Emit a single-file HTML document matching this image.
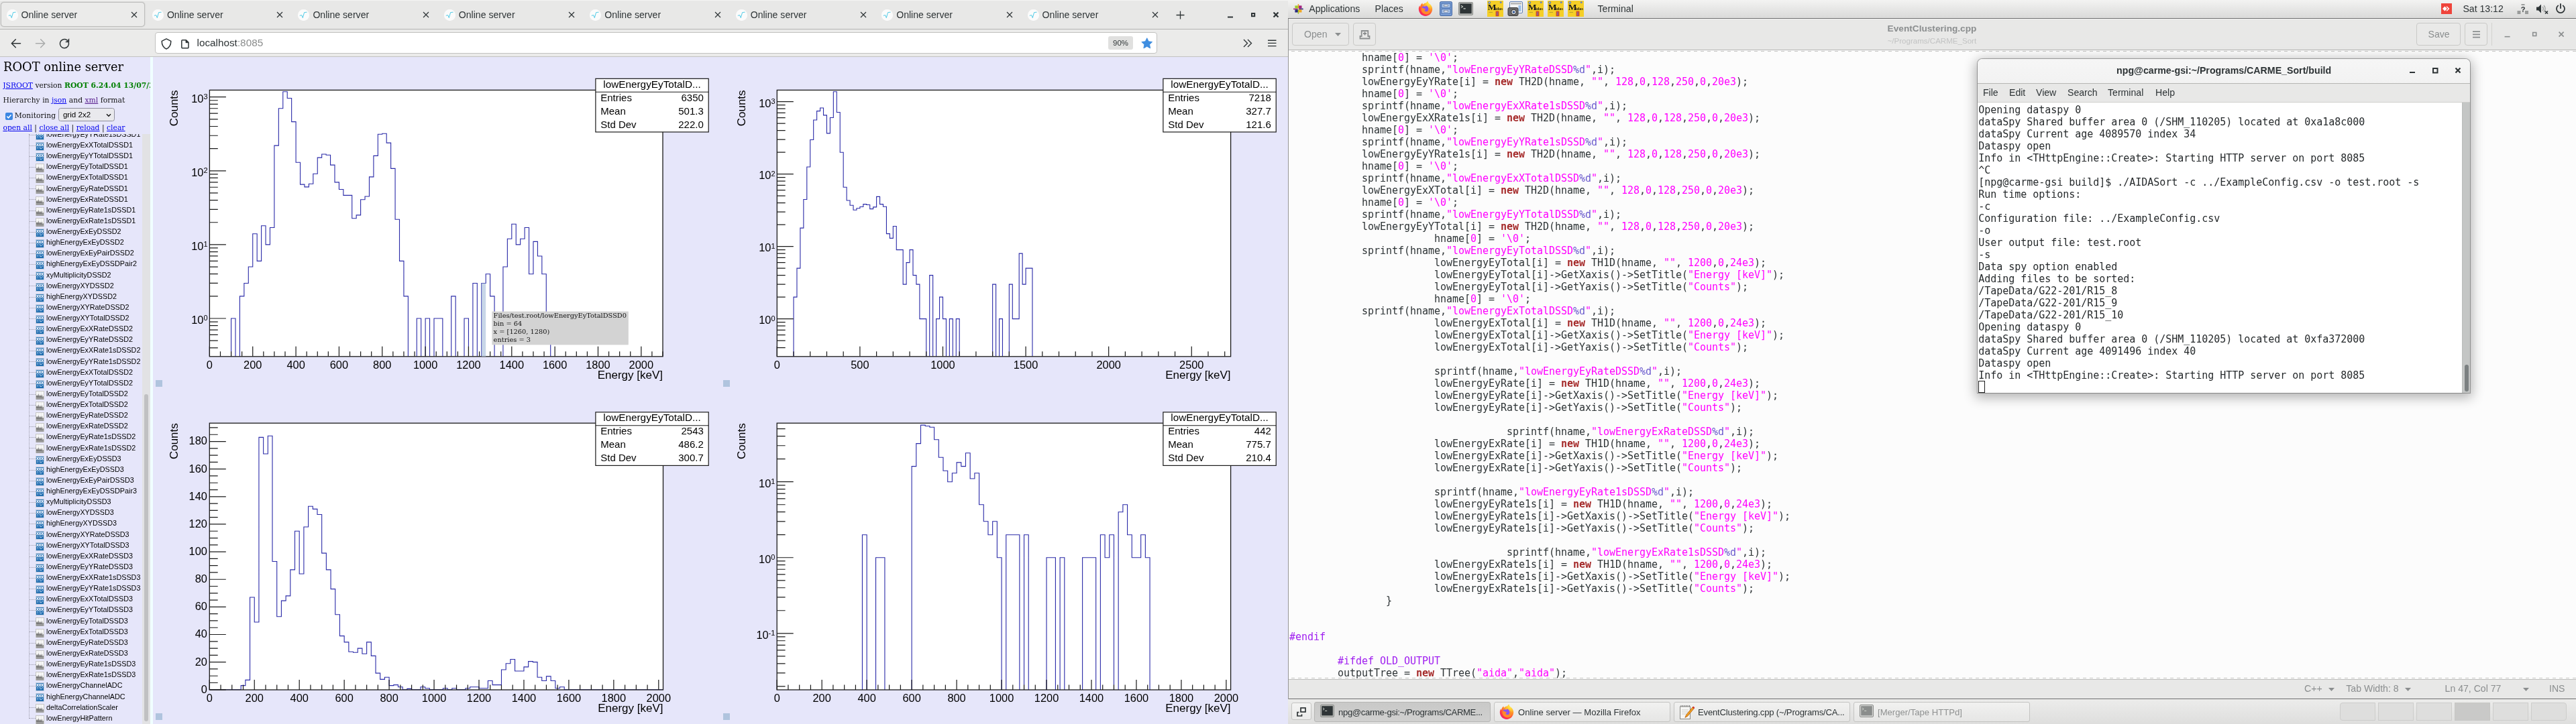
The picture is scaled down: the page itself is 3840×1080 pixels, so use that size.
<!DOCTYPE html>
<html><head><meta charset="utf-8"><title>Online server</title><style>
*{box-sizing:border-box}
html,body{margin:0;padding:0}
body{width:3840px;height:1080px;position:relative;overflow:hidden;background:#fcfcfc;font-family:"Liberation Sans",sans-serif;font-size:14.1px;color:#2e3436}
.abs{position:absolute}
.ui{font-family:"Liberation Sans",sans-serif;font-size:14.1px;white-space:pre}
svg{display:block}
#ff,#gn{will-change:transform}
/* firefox */
#ff{position:absolute;left:0;top:0;width:1920px;height:1080px;overflow:hidden;background:#e6e6fa}
#tabbar{position:absolute;left:0;top:0;width:1920px;height:44px;background:#e8e8e7;border-bottom:1px solid #b4b4b2}
#navbar{position:absolute;left:0;top:44px;width:1920px;height:41px;background:#ebebea;border-bottom:1px solid #c3c3c1}
.tab{position:absolute;top:0;height:43px;width:217.7px}
.tab .t{position:absolute;left:31.5px;top:13.5px;font-size:14.1px;line-height:17px;color:#2e3436;white-space:pre}
.tab .fav{position:absolute;left:9.5px;top:13.5px;width:17px;height:17px;border-radius:50%;background:#fcfcfc}
.tab .x{position:absolute;left:195px;top:17px}
#seltab{position:absolute;left:1.2px;top:3.2px;width:215.2px;height:37.2px;border:1px solid #bebebc;border-radius:5px;background:#ebebea;box-shadow:0 0 1.5px rgba(0,0,0,.25)}
#url{position:absolute;left:231px;top:4px;width:1493.5px;height:32px;background:#fff;border:1px solid #c2c2c0;border-radius:4px}
/* jsroot */
#left{position:absolute;left:0;top:85px;width:224px;height:995px;background:#e6e6fa;overflow:hidden;font-family:"DejaVu Serif","Liberation Serif",serif;font-size:10.8px;color:#111}
#sep{position:absolute;left:224px;top:85px;width:4px;height:995px;background:#f0ffff}
#left a{color:#0000ee;text-decoration:underline}
#tree{position:absolute;left:0;top:115px;width:212px;height:880px;overflow:hidden;font-family:"Liberation Sans",sans-serif;font-size:10.8px;color:#000}
.it{position:absolute;left:69px;height:16px;line-height:16px;white-space:pre}
.ic{position:absolute;left:53px;width:13px;height:13px}
/* gnome */
#gn{position:absolute;left:1920px;top:0;width:1920px;height:1080px;overflow:hidden;background:#fcfcfc}
#panel{position:absolute;left:0;top:0;width:1920px;height:28px;background:linear-gradient(#f3f3f2,#e4e4e3 60%,#dadad9);border-bottom:1px solid #6f6f6f}
#ghead{position:absolute;left:0;top:28px;width:1920px;height:47px;background:#e8e8e7;border-bottom:1px solid #b5b5b3;border-left:1px solid #8f8f8f;border-top:1px solid #f4f4f3}
.btn{position:absolute;border:1px solid #c9c9c7;border-radius:4px;background:#e9e9e8}
#code{position:absolute;left:0;top:77.4px;width:1920px;height:937px;font-family:"DejaVu Sans Mono","Liberation Mono",monospace;font-size:15px;letter-spacing:-0.031px;line-height:18px;color:#2e3436;white-space:pre;border-left:1px solid #8f8f8f}
#code div{height:18px;position:absolute;left:1.5px}
.s{color:#ff00ff}.n{color:#ff00ff}.f{color:#6a5acd}.k{color:#a52a2a;font-weight:bold}.p{color:#a020f0}
#status{position:absolute;left:0;top:1013px;width:1920px;height:30px;background:#e8e8e7;border-top:1px solid #bdbdbb;border-left:1px solid #8f8f8f;color:#8b8e8f}
#taskbar{position:absolute;left:0;top:1042px;width:1920px;height:38px;background:linear-gradient(#ececeb,#dededd);border-top:1px solid #707070}
.task{position:absolute;top:3.5px;height:30.5px;width:263px;border:1px solid #c4c4c2;border-radius:3px;background:linear-gradient(#f1f1f0,#e6e6e5)}
.task span{position:absolute;left:35px;top:6px;font-size:13.1px;line-height:17px;white-space:pre}
/* terminal */
#term{position:absolute;left:1028px;top:87.5px;width:734.3px;height:498.8px;border-radius:7px 7px 0 0;box-shadow:0 4px 18px 3px rgba(0,0,0,.3),0 0 0 1px rgba(0,0,0,.3);background:#fff}
#ttitle{position:absolute;left:0;top:0;width:100%;height:37px;border-radius:7px 7px 0 0;background:linear-gradient(#f6f6f6,#f2f2f2);border-bottom:1px solid #b5b5b3}
#tmenu{position:absolute;left:0;top:37px;width:100%;height:28px;background:#e8e8e7;border-bottom:1px solid #cfcfcd}
#ttext{position:absolute;left:0;top:65px;width:722px;height:433.8px;background:#fff;font-family:"DejaVu Sans Mono","Liberation Mono",monospace;font-size:15px;letter-spacing:-0.031px;line-height:18px;color:#262a2c;white-space:pre}
#ttext div{position:absolute;left:1.3px;height:18px}
#tscroll{position:absolute;left:722px;top:65px;width:12.3px;height:433.8px;background:#c4c6c5;border-left:1px solid #b9bbba}
</style></head><body>
<div id="ff">
<div id="tabbar">
<div class="abs" style="left:0;top:0;width:1920px;height:1px;background:#f4f4f3"></div><div id="seltab"></div>
<div class="tab" style="left:0.0px"><svg class="fav" viewBox="0 0 17 17"><circle cx="8.5" cy="8.5" r="8.5" fill="#fbfbfb"/><path d="M3.2,9.2 L5.8,8.6 L7.3,12.6 L9.6,4.6 L13.2,4.2" fill="none" stroke="#52cbe6" stroke-width="1" stroke-linejoin="round" stroke-linecap="round"/></svg><span class="t">Online server</span><svg class="x" width="10" height="10" viewBox="0 0 10 10"><path d="M1,1L9,9M9,1L1,9" stroke="#2e3436" stroke-width="1.15" fill="none"/></svg></div>
<div class="tab" style="left:217.4px"><svg class="fav" viewBox="0 0 17 17"><circle cx="8.5" cy="8.5" r="8.5" fill="#fbfbfb"/><path d="M3.2,9.2 L5.8,8.6 L7.3,12.6 L9.6,4.6 L13.2,4.2" fill="none" stroke="#52cbe6" stroke-width="1" stroke-linejoin="round" stroke-linecap="round"/></svg><span class="t">Online server</span><svg class="x" width="10" height="10" viewBox="0 0 10 10"><path d="M1,1L9,9M9,1L1,9" stroke="#2e3436" stroke-width="1.15" fill="none"/></svg></div>
<div class="tab" style="left:434.9px"><svg class="fav" viewBox="0 0 17 17"><circle cx="8.5" cy="8.5" r="8.5" fill="#fbfbfb"/><path d="M3.2,9.2 L5.8,8.6 L7.3,12.6 L9.6,4.6 L13.2,4.2" fill="none" stroke="#52cbe6" stroke-width="1" stroke-linejoin="round" stroke-linecap="round"/></svg><span class="t">Online server</span><svg class="x" width="10" height="10" viewBox="0 0 10 10"><path d="M1,1L9,9M9,1L1,9" stroke="#2e3436" stroke-width="1.15" fill="none"/></svg></div>
<div class="tab" style="left:652.3px"><svg class="fav" viewBox="0 0 17 17"><circle cx="8.5" cy="8.5" r="8.5" fill="#fbfbfb"/><path d="M3.2,9.2 L5.8,8.6 L7.3,12.6 L9.6,4.6 L13.2,4.2" fill="none" stroke="#52cbe6" stroke-width="1" stroke-linejoin="round" stroke-linecap="round"/></svg><span class="t">Online server</span><svg class="x" width="10" height="10" viewBox="0 0 10 10"><path d="M1,1L9,9M9,1L1,9" stroke="#2e3436" stroke-width="1.15" fill="none"/></svg></div>
<div class="tab" style="left:869.8px"><svg class="fav" viewBox="0 0 17 17"><circle cx="8.5" cy="8.5" r="8.5" fill="#fbfbfb"/><path d="M3.2,9.2 L5.8,8.6 L7.3,12.6 L9.6,4.6 L13.2,4.2" fill="none" stroke="#52cbe6" stroke-width="1" stroke-linejoin="round" stroke-linecap="round"/></svg><span class="t">Online server</span><svg class="x" width="10" height="10" viewBox="0 0 10 10"><path d="M1,1L9,9M9,1L1,9" stroke="#2e3436" stroke-width="1.15" fill="none"/></svg></div>
<div class="tab" style="left:1087.2px"><svg class="fav" viewBox="0 0 17 17"><circle cx="8.5" cy="8.5" r="8.5" fill="#fbfbfb"/><path d="M3.2,9.2 L5.8,8.6 L7.3,12.6 L9.6,4.6 L13.2,4.2" fill="none" stroke="#52cbe6" stroke-width="1" stroke-linejoin="round" stroke-linecap="round"/></svg><span class="t">Online server</span><svg class="x" width="10" height="10" viewBox="0 0 10 10"><path d="M1,1L9,9M9,1L1,9" stroke="#2e3436" stroke-width="1.15" fill="none"/></svg></div>
<div class="tab" style="left:1304.7px"><svg class="fav" viewBox="0 0 17 17"><circle cx="8.5" cy="8.5" r="8.5" fill="#fbfbfb"/><path d="M3.2,9.2 L5.8,8.6 L7.3,12.6 L9.6,4.6 L13.2,4.2" fill="none" stroke="#52cbe6" stroke-width="1" stroke-linejoin="round" stroke-linecap="round"/></svg><span class="t">Online server</span><svg class="x" width="10" height="10" viewBox="0 0 10 10"><path d="M1,1L9,9M9,1L1,9" stroke="#2e3436" stroke-width="1.15" fill="none"/></svg></div>
<div class="tab" style="left:1522.1px"><svg class="fav" viewBox="0 0 17 17"><circle cx="8.5" cy="8.5" r="8.5" fill="#fbfbfb"/><path d="M3.2,9.2 L5.8,8.6 L7.3,12.6 L9.6,4.6 L13.2,4.2" fill="none" stroke="#52cbe6" stroke-width="1" stroke-linejoin="round" stroke-linecap="round"/></svg><span class="t">Online server</span><svg class="x" width="10" height="10" viewBox="0 0 10 10"><path d="M1,1L9,9M9,1L1,9" stroke="#2e3436" stroke-width="1.15" fill="none"/></svg></div>
<svg class="abs" style="left:1753px;top:16px" width="13" height="13" viewBox="0 0 13 13"><path d="M6.5,0.5V12.5M0.5,6.5H12.5" stroke="#2e3436" stroke-width="1.3"/></svg>
<svg class="abs" style="left:1826px;top:12px" width="90" height="22" viewBox="1826 12 90 22"><path d="M1830,25.5h8" stroke="#2e3436" stroke-width="2"/><rect x="1866" y="20" width="4.2" height="4.2" fill="none" stroke="#2e3436" stroke-width="2"/><path d="M1898.5,18.5l7,7m0,-7l-7,7" stroke="#2e3436" stroke-width="2.2"/></svg>
</div>
<div id="navbar">
<svg class="abs" style="left:10px;top:8px" width="110" height="26" viewBox="10 52 110 26" fill="none" stroke-linecap="round" stroke-linejoin="round"><path d="M30.5,64.7H17.5M23.3,58.7l-6,6l6,6" stroke="#2e3436" stroke-width="1.5"/><path d="M53.5,64.7H66.5M60.7,58.7l6,6l-6,6" stroke="#a9abab" stroke-width="1.5"/><path d="M102.3,63.2A6.6,6.6 0 1 1 99.6,59.6" stroke="#2e3436" stroke-width="1.5"/><path d="M102.8,58.2v4.6h-4.6z" fill="#2e3436" stroke="#2e3436" stroke-width="0.8"/></svg>
<div id="url">
<svg class="abs" style="left:6px;top:5.5px" width="50" height="21" viewBox="237 53.5 50 21" fill="none" stroke="#2e3436" stroke-width="1.5" stroke-linejoin="round"><path d="M247,56.4L253.8,59.9C253.8,65.6 251.4,69.4 247,71.5C242.6,69.4 240.2,65.6 240.2,59.9Z"/><path d="M271,58.2h5.4l3.6,3.6v7.2a1.2,1.2 0 0 1 -1.2,1.2h-7.8a1.2,1.2 0 0 1 -1.2,-1.2v-9.6a1.2,1.2 0 0 1 1.2,-1.2z"/><path d="M276,58.4v3.8h3.8z" fill="#2e3436" stroke-width="0.8"/></svg>
<span class="abs" style="left:61.5px;top:4.8px;font-size:15.3px;line-height:19px;white-space:pre;color:#2e3436">localhost<span style="color:#8a8c8c">:8085</span></span>
<div class="abs" style="left:1420px;top:5px;width:37px;height:20px;border-radius:3px;background:#e0e0df;font-size:11.4px;line-height:20px;text-align:center;color:#2e3436">90%</div>
<svg class="abs" style="left:1469px;top:7px" width="17.5" height="16.6" viewBox="0 0 19 18"><path d="M9.5,0.8l2.6,5.5l6,0.8l-4.4,4.2l1.1,6l-5.3,-2.9l-5.3,2.9l1.1,-6l-4.4,-4.2l6,-0.8z" fill="#3f8ee0" stroke="#3f8ee0" stroke-width="1" stroke-linejoin="round"/></svg>
</div>
<svg class="abs" style="left:1850px;top:11px" width="62" height="20" viewBox="1850 55 62 20" fill="none" stroke="#2e3436" stroke-width="1.4"><path d="M1854,59l5.5,5.5l-5.5,5.5M1860,59l5.5,5.5l-5.5,5.5"/><path d="M1890,60.2h12.5M1890,64.4h12.5M1890,68.6h12.5"/></svg>
</div>
<div id="left">
<svg width="0" height="0" style="position:absolute"><defs><symbol id="i2" viewBox="0 0 13 13"><rect x="0.5" y="0.5" width="12" height="12" fill="#1b69ae" stroke="#c3cede" stroke-width="1"/><path d="M1.6,1.8l2.8,4.2M4.4,1.8l-2.8,4.2M5.1,1.8l2.8,4.2M7.9,1.8l-2.8,4.2M8.6,1.8l2.8,4.2M11.4,1.8l-2.8,4.2" stroke="#e9f1fb" stroke-width="1.25"/><path d="M2,7.8h2.4M5.4,7.6h2.4M9,7.8h2.2M2.6,9.8h1.6M6,9.6h3.6" stroke="#b4d2ee" stroke-width="1"/></symbol><symbol id="i1" viewBox="0 0 13 13"><rect x="0.5" y="0.5" width="12" height="12" fill="#f7f7f7" stroke="#c6c6c6" stroke-width="1"/><path d="M4.5,1v8M8.5,1v8" stroke="#e9e9e9" stroke-width="0.8"/><path d="M1,12.5V8.2l1.3,-2.6l1.1,3l1.2,-4.4l1.2,4.6l1.2,-3.2l1.2,3.4l1.2,-3.8l1.2,4.2l0.9,-1.6l0.5,1.8V12.5z" fill="#6f6f6f"/><rect x="1" y="9.6" width="11" height="2.9" fill="#9b9b9b"/></symbol></defs></svg>
<div class="abs" style="left:5px;top:2.5px;font-size:17.85px;line-height:24px;white-space:pre;color:#000">ROOT online server</div>
<div class="abs" style="left:4.2px;top:35.7px;width:220px;overflow:hidden;line-height:14px;white-space:pre"><a>JSROOT</a> version <b style="color:#008000">ROOT 6.24.04 13/07/2021</b></div>
<div class="abs" style="left:4.6px;top:57.6px;line-height:14px;white-space:pre">Hierarchy in <a>json</a> and <a style="color:#551a8b">xml</a> format</div>
<svg class="abs" style="left:8px;top:83px" width="11" height="11" viewBox="0 0 11 11"><rect width="11" height="11" rx="2" fill="#3b86e2"/><path d="M2.4,5.6l2.2,2.2l4,-4.6" fill="none" stroke="#fff" stroke-width="1.5"/></svg>
<div class="abs" style="left:21.8px;top:80.7px;line-height:14px;white-space:pre">Monitoring</div>
<div class="abs" style="left:87.4px;top:76.3px;width:83.2px;height:20px;border:1px solid #8f8f9d;border-radius:3.5px;background:#e9e9ed;font-family:Liberation Sans,sans-serif;font-size:11.6px;line-height:18px;padding-left:5.5px;color:#000;white-space:pre">grid 2x2</div>
<svg class="abs" style="left:158px;top:83.6px" width="8" height="6" viewBox="0 0 8 6"><path d="M1,1.2l3,3l3,-3" fill="none" stroke="#111" stroke-width="1.4"/></svg>
<div class="abs" style="left:4.4px;top:98.8px;line-height:14px;white-space:pre"><a>open all</a> | <a>close all</a> | <a>reload</a> | <a>clear</a></div>
<div id="tree">
<div class="abs" style="left:43px;top:0;width:0;height:872px;border-left:1px dotted #9a9aa8"></div>
<div class="abs" style="left:44px;top:0.6px;width:9px;border-top:1px dotted #9a9aa8"></div>
<svg class="ic" style="top:-4.3px"><use href="#i2"/></svg>
<div class="it" style="top:-8.1px">lowEnergyEyYRate1sDSSD1</div>
<div class="abs" style="left:44px;top:16.7px;width:9px;border-top:1px dotted #9a9aa8"></div>
<svg class="ic" style="top:11.8px"><use href="#i2"/></svg>
<div class="it" style="top:8.0px">lowEnergyExXTotalDSSD1</div>
<div class="abs" style="left:44px;top:32.9px;width:9px;border-top:1px dotted #9a9aa8"></div>
<svg class="ic" style="top:28.0px"><use href="#i2"/></svg>
<div class="it" style="top:24.2px">lowEnergyEyYTotalDSSD1</div>
<div class="abs" style="left:44px;top:49.0px;width:9px;border-top:1px dotted #9a9aa8"></div>
<svg class="ic" style="top:44.1px"><use href="#i1"/></svg>
<div class="it" style="top:40.3px">lowEnergyEyTotalDSSD1</div>
<div class="abs" style="left:44px;top:65.1px;width:9px;border-top:1px dotted #9a9aa8"></div>
<svg class="ic" style="top:60.2px"><use href="#i1"/></svg>
<div class="it" style="top:56.4px">lowEnergyExTotalDSSD1</div>
<div class="abs" style="left:44px;top:81.2px;width:9px;border-top:1px dotted #9a9aa8"></div>
<svg class="ic" style="top:76.3px"><use href="#i1"/></svg>
<div class="it" style="top:72.5px">lowEnergyEyRateDSSD1</div>
<div class="abs" style="left:44px;top:97.4px;width:9px;border-top:1px dotted #9a9aa8"></div>
<svg class="ic" style="top:92.5px"><use href="#i1"/></svg>
<div class="it" style="top:88.7px">lowEnergyExRateDSSD1</div>
<div class="abs" style="left:44px;top:113.5px;width:9px;border-top:1px dotted #9a9aa8"></div>
<svg class="ic" style="top:108.6px"><use href="#i1"/></svg>
<div class="it" style="top:104.8px">lowEnergyEyRate1sDSSD1</div>
<div class="abs" style="left:44px;top:129.6px;width:9px;border-top:1px dotted #9a9aa8"></div>
<svg class="ic" style="top:124.7px"><use href="#i1"/></svg>
<div class="it" style="top:120.9px">lowEnergyExRate1sDSSD1</div>
<div class="abs" style="left:44px;top:145.7px;width:9px;border-top:1px dotted #9a9aa8"></div>
<svg class="ic" style="top:140.8px"><use href="#i2"/></svg>
<div class="it" style="top:137.0px">lowEnergyExEyDSSD2</div>
<div class="abs" style="left:44px;top:161.9px;width:9px;border-top:1px dotted #9a9aa8"></div>
<svg class="ic" style="top:157.0px"><use href="#i2"/></svg>
<div class="it" style="top:153.2px">highEnergyExEyDSSD2</div>
<div class="abs" style="left:44px;top:178.0px;width:9px;border-top:1px dotted #9a9aa8"></div>
<svg class="ic" style="top:173.1px"><use href="#i2"/></svg>
<div class="it" style="top:169.3px">lowEnergyExEyPairDSSD2</div>
<div class="abs" style="left:44px;top:194.1px;width:9px;border-top:1px dotted #9a9aa8"></div>
<svg class="ic" style="top:189.2px"><use href="#i2"/></svg>
<div class="it" style="top:185.4px">highEnergyExEyDSSDPair2</div>
<div class="abs" style="left:44px;top:210.2px;width:9px;border-top:1px dotted #9a9aa8"></div>
<svg class="ic" style="top:205.3px"><use href="#i2"/></svg>
<div class="it" style="top:201.5px">xyMultiplicityDSSD2</div>
<div class="abs" style="left:44px;top:226.4px;width:9px;border-top:1px dotted #9a9aa8"></div>
<svg class="ic" style="top:221.5px"><use href="#i2"/></svg>
<div class="it" style="top:217.7px">lowEnergyXYDSSD2</div>
<div class="abs" style="left:44px;top:242.5px;width:9px;border-top:1px dotted #9a9aa8"></div>
<svg class="ic" style="top:237.6px"><use href="#i2"/></svg>
<div class="it" style="top:233.8px">highEnergyXYDSSD2</div>
<div class="abs" style="left:44px;top:258.6px;width:9px;border-top:1px dotted #9a9aa8"></div>
<svg class="ic" style="top:253.7px"><use href="#i2"/></svg>
<div class="it" style="top:249.9px">lowEnergyXYRateDSSD2</div>
<div class="abs" style="left:44px;top:274.7px;width:9px;border-top:1px dotted #9a9aa8"></div>
<svg class="ic" style="top:269.8px"><use href="#i2"/></svg>
<div class="it" style="top:266.0px">lowEnergyXYTotalDSSD2</div>
<div class="abs" style="left:44px;top:290.9px;width:9px;border-top:1px dotted #9a9aa8"></div>
<svg class="ic" style="top:286.0px"><use href="#i2"/></svg>
<div class="it" style="top:282.2px">lowEnergyExXRateDSSD2</div>
<div class="abs" style="left:44px;top:307.0px;width:9px;border-top:1px dotted #9a9aa8"></div>
<svg class="ic" style="top:302.1px"><use href="#i2"/></svg>
<div class="it" style="top:298.3px">lowEnergyEyYRateDSSD2</div>
<div class="abs" style="left:44px;top:323.1px;width:9px;border-top:1px dotted #9a9aa8"></div>
<svg class="ic" style="top:318.2px"><use href="#i2"/></svg>
<div class="it" style="top:314.4px">lowEnergyExXRate1sDSSD2</div>
<div class="abs" style="left:44px;top:339.2px;width:9px;border-top:1px dotted #9a9aa8"></div>
<svg class="ic" style="top:334.3px"><use href="#i2"/></svg>
<div class="it" style="top:330.5px">lowEnergyEyYRate1sDSSD2</div>
<div class="abs" style="left:44px;top:355.4px;width:9px;border-top:1px dotted #9a9aa8"></div>
<svg class="ic" style="top:350.5px"><use href="#i2"/></svg>
<div class="it" style="top:346.7px">lowEnergyExXTotalDSSD2</div>
<div class="abs" style="left:44px;top:371.5px;width:9px;border-top:1px dotted #9a9aa8"></div>
<svg class="ic" style="top:366.6px"><use href="#i2"/></svg>
<div class="it" style="top:362.8px">lowEnergyEyYTotalDSSD2</div>
<div class="abs" style="left:44px;top:387.6px;width:9px;border-top:1px dotted #9a9aa8"></div>
<svg class="ic" style="top:382.7px"><use href="#i1"/></svg>
<div class="it" style="top:378.9px">lowEnergyEyTotalDSSD2</div>
<div class="abs" style="left:44px;top:403.8px;width:9px;border-top:1px dotted #9a9aa8"></div>
<svg class="ic" style="top:398.9px"><use href="#i1"/></svg>
<div class="it" style="top:395.1px">lowEnergyExTotalDSSD2</div>
<div class="abs" style="left:44px;top:419.9px;width:9px;border-top:1px dotted #9a9aa8"></div>
<svg class="ic" style="top:415.0px"><use href="#i1"/></svg>
<div class="it" style="top:411.2px">lowEnergyEyRateDSSD2</div>
<div class="abs" style="left:44px;top:436.0px;width:9px;border-top:1px dotted #9a9aa8"></div>
<svg class="ic" style="top:431.1px"><use href="#i1"/></svg>
<div class="it" style="top:427.3px">lowEnergyExRateDSSD2</div>
<div class="abs" style="left:44px;top:452.1px;width:9px;border-top:1px dotted #9a9aa8"></div>
<svg class="ic" style="top:447.2px"><use href="#i1"/></svg>
<div class="it" style="top:443.4px">lowEnergyEyRate1sDSSD2</div>
<div class="abs" style="left:44px;top:468.3px;width:9px;border-top:1px dotted #9a9aa8"></div>
<svg class="ic" style="top:463.4px"><use href="#i1"/></svg>
<div class="it" style="top:459.6px">lowEnergyExRate1sDSSD2</div>
<div class="abs" style="left:44px;top:484.4px;width:9px;border-top:1px dotted #9a9aa8"></div>
<svg class="ic" style="top:479.5px"><use href="#i2"/></svg>
<div class="it" style="top:475.7px">lowEnergyExEyDSSD3</div>
<div class="abs" style="left:44px;top:500.5px;width:9px;border-top:1px dotted #9a9aa8"></div>
<svg class="ic" style="top:495.6px"><use href="#i2"/></svg>
<div class="it" style="top:491.8px">highEnergyExEyDSSD3</div>
<div class="abs" style="left:44px;top:516.6px;width:9px;border-top:1px dotted #9a9aa8"></div>
<svg class="ic" style="top:511.7px"><use href="#i2"/></svg>
<div class="it" style="top:507.9px">lowEnergyExEyPairDSSD3</div>
<div class="abs" style="left:44px;top:532.8px;width:9px;border-top:1px dotted #9a9aa8"></div>
<svg class="ic" style="top:527.9px"><use href="#i2"/></svg>
<div class="it" style="top:524.1px">highEnergyExEyDSSDPair3</div>
<div class="abs" style="left:44px;top:548.9px;width:9px;border-top:1px dotted #9a9aa8"></div>
<svg class="ic" style="top:544.0px"><use href="#i2"/></svg>
<div class="it" style="top:540.2px">xyMultiplicityDSSD3</div>
<div class="abs" style="left:44px;top:565.0px;width:9px;border-top:1px dotted #9a9aa8"></div>
<svg class="ic" style="top:560.1px"><use href="#i2"/></svg>
<div class="it" style="top:556.3px">lowEnergyXYDSSD3</div>
<div class="abs" style="left:44px;top:581.1px;width:9px;border-top:1px dotted #9a9aa8"></div>
<svg class="ic" style="top:576.2px"><use href="#i2"/></svg>
<div class="it" style="top:572.4px">highEnergyXYDSSD3</div>
<div class="abs" style="left:44px;top:597.3px;width:9px;border-top:1px dotted #9a9aa8"></div>
<svg class="ic" style="top:592.4px"><use href="#i2"/></svg>
<div class="it" style="top:588.6px">lowEnergyXYRateDSSD3</div>
<div class="abs" style="left:44px;top:613.4px;width:9px;border-top:1px dotted #9a9aa8"></div>
<svg class="ic" style="top:608.5px"><use href="#i2"/></svg>
<div class="it" style="top:604.7px">lowEnergyXYTotalDSSD3</div>
<div class="abs" style="left:44px;top:629.5px;width:9px;border-top:1px dotted #9a9aa8"></div>
<svg class="ic" style="top:624.6px"><use href="#i2"/></svg>
<div class="it" style="top:620.8px">lowEnergyExXRateDSSD3</div>
<div class="abs" style="left:44px;top:645.6px;width:9px;border-top:1px dotted #9a9aa8"></div>
<svg class="ic" style="top:640.7px"><use href="#i2"/></svg>
<div class="it" style="top:636.9px">lowEnergyEyYRateDSSD3</div>
<div class="abs" style="left:44px;top:661.8px;width:9px;border-top:1px dotted #9a9aa8"></div>
<svg class="ic" style="top:656.9px"><use href="#i2"/></svg>
<div class="it" style="top:653.1px">lowEnergyExXRate1sDSSD3</div>
<div class="abs" style="left:44px;top:677.9px;width:9px;border-top:1px dotted #9a9aa8"></div>
<svg class="ic" style="top:673.0px"><use href="#i2"/></svg>
<div class="it" style="top:669.2px">lowEnergyEyYRate1sDSSD3</div>
<div class="abs" style="left:44px;top:694.0px;width:9px;border-top:1px dotted #9a9aa8"></div>
<svg class="ic" style="top:689.1px"><use href="#i2"/></svg>
<div class="it" style="top:685.3px">lowEnergyExXTotalDSSD3</div>
<div class="abs" style="left:44px;top:710.1px;width:9px;border-top:1px dotted #9a9aa8"></div>
<svg class="ic" style="top:705.2px"><use href="#i2"/></svg>
<div class="it" style="top:701.4px">lowEnergyEyYTotalDSSD3</div>
<div class="abs" style="left:44px;top:726.3px;width:9px;border-top:1px dotted #9a9aa8"></div>
<svg class="ic" style="top:721.4px"><use href="#i1"/></svg>
<div class="it" style="top:717.6px">lowEnergyEyTotalDSSD3</div>
<div class="abs" style="left:44px;top:742.4px;width:9px;border-top:1px dotted #9a9aa8"></div>
<svg class="ic" style="top:737.5px"><use href="#i1"/></svg>
<div class="it" style="top:733.7px">lowEnergyExTotalDSSD3</div>
<div class="abs" style="left:44px;top:758.5px;width:9px;border-top:1px dotted #9a9aa8"></div>
<svg class="ic" style="top:753.6px"><use href="#i1"/></svg>
<div class="it" style="top:749.8px">lowEnergyEyRateDSSD3</div>
<div class="abs" style="left:44px;top:774.6px;width:9px;border-top:1px dotted #9a9aa8"></div>
<svg class="ic" style="top:769.7px"><use href="#i1"/></svg>
<div class="it" style="top:765.9px">lowEnergyExRateDSSD3</div>
<div class="abs" style="left:44px;top:790.8px;width:9px;border-top:1px dotted #9a9aa8"></div>
<svg class="ic" style="top:785.9px"><use href="#i1"/></svg>
<div class="it" style="top:782.1px">lowEnergyEyRate1sDSSD3</div>
<div class="abs" style="left:44px;top:806.9px;width:9px;border-top:1px dotted #9a9aa8"></div>
<svg class="ic" style="top:802.0px"><use href="#i1"/></svg>
<div class="it" style="top:798.2px">lowEnergyExRate1sDSSD3</div>
<div class="abs" style="left:44px;top:823.0px;width:9px;border-top:1px dotted #9a9aa8"></div>
<svg class="ic" style="top:818.1px"><use href="#i2"/></svg>
<div class="it" style="top:814.3px">lowEnergyChannelADC</div>
<div class="abs" style="left:44px;top:839.2px;width:9px;border-top:1px dotted #9a9aa8"></div>
<svg class="ic" style="top:834.3px"><use href="#i2"/></svg>
<div class="it" style="top:830.5px">highEnergyChannelADC</div>
<div class="abs" style="left:44px;top:855.3px;width:9px;border-top:1px dotted #9a9aa8"></div>
<svg class="ic" style="top:850.4px"><use href="#i1"/></svg>
<div class="it" style="top:846.6px">deltaCorrelationScaler</div>
<div class="abs" style="left:44px;top:871.4px;width:9px;border-top:1px dotted #9a9aa8"></div>
<svg class="ic" style="top:866.5px"><use href="#i1"/></svg>
<div class="it" style="top:862.7px">lowEnergyHitPattern</div>
</div>
<div class="abs" style="left:212px;top:115px;width:12px;height:880px;background:#e2e2e4"></div>
<div class="abs" style="left:215.2px;top:502.5px;width:6px;height:488px;border-radius:3px;background:#c0c0c2"></div>
</div>
<div id="sep"></div>
<svg width="1692" height="995" viewBox="228 85 1692 995" style="position:absolute;left:228px;top:85px;overflow:hidden">
<clipPath id="clip1"><rect x="312.4" y="134.4" width="675.6" height="397.4"/></clipPath>
<rect x="312.4" y="134.4" width="675.6" height="397.4" fill="#fff" stroke="none"/>
<path d="M312.4,537.8V537.8H344.57V475H351.01V537.8H357.44V441.86H363.87V422.47H370.31V398.04H376.74V348.81H383.18V389.33H389.61V336.79H396.05V364.9H402.48V339.53H408.91V217.1H415.35V161.82H421.78V136.7H428.22V146.55H434.65V181.62H441.09V242.25H447.52V275.1H453.95V278.83H460.39V274.31H466.82V259.31H473.26V235.09H479.69V229.99H486.13V231.29H492.56V246.08H498.99V271.85H505.43V282.52H511.86V291.41H524.73V325.7H531.17V320.9H537.6V297.78H544.03V292.98H550.47V263.88H556.9V232.33H563.34V200.24H569.77V199.18H576.21V213.14H582.64V251.34H589.07V327.2H595.51V389.33H601.94V441.86H608.38V537.8H621.25V475H627.68V537.8H634.11V475H640.55V537.8H646.98V475H659.85V537.8H672.72V441.86H679.15V537.8H692.02V475H698.46V537.8H704.89V422.47H711.33V537.8H717.76V422.47H724.19V408.71H730.63V441.86H737.06V537.8H749.93V398.04H756.37V356.18H762.8V334.21H769.23V364.9H775.67V356.18H782.1V339.53H788.54V408.71H794.97V360.34H801.41V381.95H807.84V408.71H814.27V475H820.71V537.8H988V537.8" fill="none" stroke="#2a2aa8" stroke-width="1.1" clip-path="url(#clip1)"/>
<path d="M312.4,531.8v-15M328.49,531.8v-7.6M344.57,531.8v-7.6M360.66,531.8v-7.6M376.74,531.8v-15M392.83,531.8v-7.6M408.91,531.8v-7.6M425,531.8v-7.6M441.09,531.8v-15M457.17,531.8v-7.6M473.26,531.8v-7.6M489.34,531.8v-7.6M505.43,531.8v-15M521.51,531.8v-7.6M537.6,531.8v-7.6M553.69,531.8v-7.6M569.77,531.8v-15M585.86,531.8v-7.6M601.94,531.8v-7.6M618.03,531.8v-7.6M634.11,531.8v-15M650.2,531.8v-7.6M666.29,531.8v-7.6M682.37,531.8v-7.6M698.46,531.8v-15M714.54,531.8v-7.6M730.63,531.8v-7.6M746.71,531.8v-7.6M762.8,531.8v-15M778.89,531.8v-7.6M794.97,531.8v-7.6M811.06,531.8v-7.6M827.14,531.8v-15M843.23,531.8v-7.6M859.31,531.8v-7.6M875.4,531.8v-7.6M891.49,531.8v-15M907.57,531.8v-7.6M923.66,531.8v-7.6M939.74,531.8v-7.6M955.83,531.8v-15M971.91,531.8v-7.6M988,531.8v-7.6M312.4,518.81h12.4M312.4,508.14h12.4M312.4,499.43h12.4M312.4,492.05h12.4M312.4,485.67h12.4M312.4,480.04h12.4M312.4,475h24.5M312.4,441.86h12.4M312.4,422.47h12.4M312.4,408.71h12.4M312.4,398.04h12.4M312.4,389.33h12.4M312.4,381.95h12.4M312.4,375.57h12.4M312.4,369.94h12.4M312.4,364.9h24.5M312.4,331.76h12.4M312.4,312.37h12.4M312.4,298.61h12.4M312.4,287.94h12.4M312.4,279.23h12.4M312.4,271.85h12.4M312.4,265.47h12.4M312.4,259.84h12.4M312.4,254.8h24.5M312.4,221.66h12.4M312.4,202.27h12.4M312.4,188.51h12.4M312.4,177.84h12.4M312.4,169.13h12.4M312.4,161.75h12.4M312.4,155.37h12.4M312.4,149.74h12.4M312.4,144.7h24.5" fill="none" stroke="#1a1a1a" stroke-width="1.2"/>
<rect x="312.4" y="134.4" width="675.6" height="397.4" fill="none" stroke="#1a1a1a" stroke-width="1.3"/>
<g font-family="Liberation Sans, sans-serif" font-size="16.4" fill="#000"><text x="312.4" y="549.5" text-anchor="middle">0</text><text x="376.74" y="549.5" text-anchor="middle">200</text><text x="441.09" y="549.5" text-anchor="middle">400</text><text x="505.43" y="549.5" text-anchor="middle">600</text><text x="569.77" y="549.5" text-anchor="middle">800</text><text x="634.11" y="549.5" text-anchor="middle">1000</text><text x="698.46" y="549.5" text-anchor="middle">1200</text><text x="762.8" y="549.5" text-anchor="middle">1400</text><text x="827.14" y="549.5" text-anchor="middle">1600</text><text x="891.49" y="549.5" text-anchor="middle">1800</text><text x="955.83" y="549.5" text-anchor="middle">2000</text><text x="988" y="565" text-anchor="end" font-size="17">Energy [keV]</text><text transform="translate(265.2,134.4) rotate(-90)" text-anchor="end" font-size="17">Counts</text><text x="309.6" y="482.8" text-anchor="end">10<tspan font-size="11" dy="-4.6">0</tspan></text><text x="309.6" y="372.7" text-anchor="end">10<tspan font-size="11" dy="-4.6">1</tspan></text><text x="309.6" y="262.6" text-anchor="end">10<tspan font-size="11" dy="-4.6">2</tspan></text><text x="309.6" y="152.5" text-anchor="end">10<tspan font-size="11" dy="-4.6">3</tspan></text></g>
<rect x="887.88" y="117.34" width="168.35" height="79.6" fill="#fff" stroke="#1a1a1a" stroke-width="1.2"/>
<path d="M887.88,137.24H1056.23" stroke="#1a1a1a" stroke-width="1.2"/>
<g font-family="Liberation Sans, sans-serif" font-size="15" fill="#000"><text x="972.06" y="130.69" text-anchor="middle" font-size="15.3">lowEnergyEyTotalD...</text><text x="895.28" y="150.89">Entries</text><text x="1048.83" y="150.89" text-anchor="end">6350</text><text x="895.28" y="170.79">Mean</text><text x="1048.83" y="170.79" text-anchor="end">501.3</text><text x="895.28" y="190.69">Std Dev</text><text x="1048.83" y="190.69" text-anchor="end">222.0</text></g>
<clipPath id="clip2"><rect x="1158.3" y="134.4" width="676.3" height="397.4"/></clipPath>
<rect x="1158.3" y="134.4" width="676.3" height="397.4" fill="#fff" stroke="none"/>
<path d="M1158.3,537.8V537.8H1183.02V443.11H1187.96V400.14H1192.91V340.08H1197.85V297.43H1202.79V248.94H1207.74V208.47H1212.68V179.06H1217.62V165.63H1222.57V161.06H1227.51V171.83H1232.46V198.83H1237.4V175.57H1242.34V136.7H1247.29V167.5H1252.23V227.26H1257.17V279.22H1262.12V299.03H1267.06V306.29H1272.01V313.25H1276.95V310.81H1281.89V308.5H1286.84V304.67H1291.78V305.54H1296.72V311.66H1301.67V308.9H1306.61V293.41H1311.56V304.67H1316.5V308.23H1321.44V348.63H1326.39V355.34H1331.33V337.54H1336.27V372.58H1346.16V424.1H1351.1V391.59H1356.05V372.58H1360.99V410.61H1365.94V424.1H1370.88V475.61H1380.77V537.8H1385.71V410.61H1390.65V537.8H1395.6V475.61H1400.54V443.11H1405.49V475.61H1410.43V537.8H1415.37V475.61H1420.32V537.8H1425.26V475.61H1430.2V537.8H1479.64V424.1H1484.59V537.8H1489.53V475.61H1494.47V537.8H1504.36V424.1H1509.3V475.61H1519.19V378.1H1524.13V424.1H1529.08V400.14H1538.97V537.8H1835.59V537.8" fill="none" stroke="#2a2aa8" stroke-width="1.1" clip-path="url(#clip2)"/>
<path d="M1158.3,531.8v-15M1183.02,531.8v-7.6M1207.74,531.8v-7.6M1232.46,531.8v-7.6M1257.17,531.8v-7.6M1281.89,531.8v-15M1306.61,531.8v-7.6M1331.33,531.8v-7.6M1356.05,531.8v-7.6M1380.77,531.8v-7.6M1405.49,531.8v-15M1430.2,531.8v-7.6M1454.92,531.8v-7.6M1479.64,531.8v-7.6M1504.36,531.8v-7.6M1529.08,531.8v-15M1553.8,531.8v-7.6M1578.52,531.8v-7.6M1603.23,531.8v-7.6M1627.95,531.8v-7.6M1652.67,531.8v-15M1677.39,531.8v-7.6M1702.11,531.8v-7.6M1726.83,531.8v-7.6M1751.55,531.8v-7.6M1776.26,531.8v-15M1800.98,531.8v-7.6M1825.7,531.8v-7.6M1158.3,518.58h12.4M1158.3,508.11h12.4M1158.3,499.56h12.4M1158.3,492.33h12.4M1158.3,486.07h12.4M1158.3,480.55h12.4M1158.3,475.61h24.5M1158.3,443.11h12.4M1158.3,424.1h12.4M1158.3,410.61h12.4M1158.3,400.14h12.4M1158.3,391.59h12.4M1158.3,384.36h12.4M1158.3,378.1h12.4M1158.3,372.58h12.4M1158.3,367.64h24.5M1158.3,335.14h12.4M1158.3,316.13h12.4M1158.3,302.64h12.4M1158.3,292.17h12.4M1158.3,283.62h12.4M1158.3,276.39h12.4M1158.3,270.13h12.4M1158.3,264.61h12.4M1158.3,259.67h24.5M1158.3,227.17h12.4M1158.3,208.16h12.4M1158.3,194.67h12.4M1158.3,184.2h12.4M1158.3,175.65h12.4M1158.3,168.42h12.4M1158.3,162.16h12.4M1158.3,156.64h12.4M1158.3,151.7h24.5" fill="none" stroke="#1a1a1a" stroke-width="1.2"/>
<rect x="1158.3" y="134.4" width="676.3" height="397.4" fill="none" stroke="#1a1a1a" stroke-width="1.3"/>
<g font-family="Liberation Sans, sans-serif" font-size="16.4" fill="#000"><text x="1158.3" y="549.5" text-anchor="middle">0</text><text x="1281.89" y="549.5" text-anchor="middle">500</text><text x="1405.49" y="549.5" text-anchor="middle">1000</text><text x="1529.08" y="549.5" text-anchor="middle">1500</text><text x="1652.67" y="549.5" text-anchor="middle">2000</text><text x="1776.26" y="549.5" text-anchor="middle">2500</text><text x="1834.6" y="565" text-anchor="end" font-size="17">Energy [keV]</text><text transform="translate(1111.1,134.4) rotate(-90)" text-anchor="end" font-size="17">Counts</text><text x="1155.5" y="483.41" text-anchor="end">10<tspan font-size="11" dy="-4.6">0</tspan></text><text x="1155.5" y="375.44" text-anchor="end">10<tspan font-size="11" dy="-4.6">1</tspan></text><text x="1155.5" y="267.47" text-anchor="end">10<tspan font-size="11" dy="-4.6">2</tspan></text><text x="1155.5" y="159.5" text-anchor="end">10<tspan font-size="11" dy="-4.6">3</tspan></text></g>
<rect x="1733.88" y="117.34" width="168.35" height="79.6" fill="#fff" stroke="#1a1a1a" stroke-width="1.2"/>
<path d="M1733.88,137.24H1902.23" stroke="#1a1a1a" stroke-width="1.2"/>
<g font-family="Liberation Sans, sans-serif" font-size="15" fill="#000"><text x="1818.06" y="130.69" text-anchor="middle" font-size="15.3">lowEnergyEyTotalD...</text><text x="1741.28" y="150.89">Entries</text><text x="1894.83" y="150.89" text-anchor="end">7218</text><text x="1741.28" y="170.79">Mean</text><text x="1894.83" y="170.79" text-anchor="end">327.7</text><text x="1741.28" y="190.69">Std Dev</text><text x="1894.83" y="190.69" text-anchor="end">121.6</text></g>
<clipPath id="clip3"><rect x="312.3" y="631.2" width="676.2" height="397.8"/></clipPath>
<rect x="312.3" y="631.2" width="676.2" height="397.8" fill="#fff" stroke="none"/>
<path d="M312.3,1028.8V1028.8H359.17V1022.63H365.86V1014.4H372.56V890.98H379.25V928.01H385.95V652.37H392.64V677.05H399.34V650.31H406.03V837.5H412.73V919.78H419.42V896.12H426.12V888.92H432.81V849.84H439.51V792.24H446.2V856.01H452.9V786.07H459.59V755.22H466.29V759.33H472.98V767.56H479.68V825.16H486.37V849.84H493.07V878.64H499.76V916.69H506.46V948.58H513.15V957.83H519.85V972.23H526.54V973.26H533.24V967.09H539.93V975.32H546.63V957.83H553.32V978.4H560.02V1004.12H566.71V1013.37H573.41V1010.29H580.1V1022.63H586.8V1021.6H593.49V1024.69H600.19V1028.8H606.88V1027.36H613.58V1028.8H626.97V1024.69H633.66V1026.74H640.36V1028.8H660.44V1026.74H667.14V1028.8H673.83V1026.74H680.53V1028.8H693.92V1026.74H700.61V1024.69H714V1026.74H727.39V1015.43H734.09V1021.6H747.48V998.97H754.17V989.72H760.87V983.55H767.56V1001.03H780.95V994.86H787.65V986.63H794.34V987.66H801.04V1010.29H807.73V1015.43H814.43V1008.85H821.12V1015.43H827.82V1026.74H834.51V1024.69H841.21V1028.8H988.5V1028.8" fill="none" stroke="#2a2aa8" stroke-width="1.1" clip-path="url(#clip3)"/>
<path d="M312.3,1029v-15M329.04,1029v-7.6M345.78,1029v-7.6M362.51,1029v-7.6M379.25,1029v-15M395.99,1029v-7.6M412.73,1029v-7.6M429.46,1029v-7.6M446.2,1029v-15M462.94,1029v-7.6M479.68,1029v-7.6M496.41,1029v-7.6M513.15,1029v-15M529.89,1029v-7.6M546.63,1029v-7.6M563.36,1029v-7.6M580.1,1029v-15M596.84,1029v-7.6M613.58,1029v-7.6M630.31,1029v-7.6M647.05,1029v-15M663.79,1029v-7.6M680.53,1029v-7.6M697.27,1029v-7.6M714,1029v-15M730.74,1029v-7.6M747.48,1029v-7.6M764.22,1029v-7.6M780.95,1029v-15M797.69,1029v-7.6M814.43,1029v-7.6M831.17,1029v-7.6M847.9,1029v-15M864.64,1029v-7.6M881.38,1029v-7.6M898.12,1029v-7.6M914.85,1029v-15M931.59,1029v-7.6M948.33,1029v-7.6M965.07,1029v-7.6M981.8,1029v-15M312.3,1028.8h24.5M312.3,1018.51h12.4M312.3,1008.23h12.4M312.3,997.94h12.4M312.3,987.66h24.5M312.3,977.38h12.4M312.3,967.09h12.4M312.3,956.8h12.4M312.3,946.52h24.5M312.3,936.23h12.4M312.3,925.95h12.4M312.3,915.66h12.4M312.3,905.38h24.5M312.3,895.1h12.4M312.3,884.81h12.4M312.3,874.52h12.4M312.3,864.24h24.5M312.3,853.95h12.4M312.3,843.67h12.4M312.3,833.38h12.4M312.3,823.1h24.5M312.3,812.81h12.4M312.3,802.53h12.4M312.3,792.24h12.4M312.3,781.96h24.5M312.3,771.67h12.4M312.3,761.39h12.4M312.3,751.11h12.4M312.3,740.82h24.5M312.3,730.53h12.4M312.3,720.25h12.4M312.3,709.96h12.4M312.3,699.68h24.5M312.3,689.39h12.4M312.3,679.11h12.4M312.3,668.83h12.4M312.3,658.54h24.5M312.3,648.25h12.4M312.3,637.97h12.4" fill="none" stroke="#1a1a1a" stroke-width="1.2"/>
<rect x="312.3" y="631.2" width="676.2" height="397.8" fill="none" stroke="#1a1a1a" stroke-width="1.3"/>
<g font-family="Liberation Sans, sans-serif" font-size="16.4" fill="#000"><text x="312.3" y="1046.7" text-anchor="middle">0</text><text x="379.25" y="1046.7" text-anchor="middle">200</text><text x="446.2" y="1046.7" text-anchor="middle">400</text><text x="513.15" y="1046.7" text-anchor="middle">600</text><text x="580.1" y="1046.7" text-anchor="middle">800</text><text x="647.05" y="1046.7" text-anchor="middle">1000</text><text x="714" y="1046.7" text-anchor="middle">1200</text><text x="780.95" y="1046.7" text-anchor="middle">1400</text><text x="847.9" y="1046.7" text-anchor="middle">1600</text><text x="914.85" y="1046.7" text-anchor="middle">1800</text><text x="981.8" y="1046.7" text-anchor="middle">2000</text><text x="988.5" y="1062.2" text-anchor="end" font-size="17">Energy [keV]</text><text transform="translate(265.1,631.2) rotate(-90)" text-anchor="end" font-size="17">Counts</text><text x="308.9" y="1033.7" text-anchor="end">0</text><text x="308.9" y="992.56" text-anchor="end">20</text><text x="308.9" y="951.42" text-anchor="end">40</text><text x="308.9" y="910.28" text-anchor="end">60</text><text x="308.9" y="869.14" text-anchor="end">80</text><text x="308.9" y="828" text-anchor="end">100</text><text x="308.9" y="786.86" text-anchor="end">120</text><text x="308.9" y="745.72" text-anchor="end">140</text><text x="308.9" y="704.58" text-anchor="end">160</text><text x="308.9" y="663.44" text-anchor="end">180</text></g>
<rect x="887.88" y="614.84" width="168.35" height="79.6" fill="#fff" stroke="#1a1a1a" stroke-width="1.2"/>
<path d="M887.88,634.74H1056.23" stroke="#1a1a1a" stroke-width="1.2"/>
<g font-family="Liberation Sans, sans-serif" font-size="15" fill="#000"><text x="972.06" y="628.19" text-anchor="middle" font-size="15.3">lowEnergyEyTotalD...</text><text x="895.28" y="648.39">Entries</text><text x="1048.83" y="648.39" text-anchor="end">2543</text><text x="895.28" y="668.29">Mean</text><text x="1048.83" y="668.29" text-anchor="end">486.2</text><text x="895.28" y="688.19">Std Dev</text><text x="1048.83" y="688.19" text-anchor="end">300.7</text></g>
<clipPath id="clip4"><rect x="1158.2" y="631.2" width="676.4" height="397.8"/></clipPath>
<rect x="1158.2" y="631.2" width="676.4" height="397.8" fill="#fff" stroke="none"/>
<path d="M1158.2,1035V1035H1285.44V797.72H1292.14V1035H1305.53V831.75H1318.93V1035H1359.11V695.62H1365.81V661.59H1372.5V634.12H1379.2V635.54H1385.9V637.19H1392.6V655.81H1399.29V682.27H1405.99V702.18H1412.69V718.7H1419.38V705.82H1426.08V689.84H1432.78V695.62H1439.48V675.72H1446.17V714.02H1452.87V705.82H1459.57V752.73H1466.26V777.81H1472.96V797.72H1479.66V777.81H1486.35V831.75H1493.05V1035H1499.75V797.72H1519.84V1035H1526.54V797.72H1533.23V1035H1560.02V831.75H1573.42V1035H1580.11V831.75H1586.81V1035H1613.6V831.75H1633.69V1035H1640.39V797.72H1647.08V831.75H1653.78V797.72H1660.48V1035H1667.17V763.69H1673.87V752.73H1680.57V797.72H1687.27V831.75H1700.66V797.72H1707.36V831.75H1714.05V1035H1834.6V1035" fill="none" stroke="#2a2aa8" stroke-width="1.1" clip-path="url(#clip4)"/>
<path d="M1158.2,1029v-15M1174.94,1029v-7.6M1191.69,1029v-7.6M1208.43,1029v-7.6M1225.17,1029v-15M1241.91,1029v-7.6M1258.66,1029v-7.6M1275.4,1029v-7.6M1292.14,1029v-15M1308.88,1029v-7.6M1325.63,1029v-7.6M1342.37,1029v-7.6M1359.11,1029v-15M1375.85,1029v-7.6M1392.6,1029v-7.6M1409.34,1029v-7.6M1426.08,1029v-15M1442.82,1029v-7.6M1459.57,1029v-7.6M1476.31,1029v-7.6M1493.05,1029v-15M1509.79,1029v-7.6M1526.54,1029v-7.6M1543.28,1029v-7.6M1560.02,1029v-15M1576.76,1029v-7.6M1593.51,1029v-7.6M1610.25,1029v-7.6M1626.99,1029v-15M1643.73,1029v-7.6M1660.48,1029v-7.6M1677.22,1029v-7.6M1693.96,1029v-15M1710.7,1029v-7.6M1727.45,1029v-7.6M1744.19,1029v-7.6M1760.93,1029v-15M1777.68,1029v-7.6M1794.42,1029v-7.6M1811.16,1029v-7.6M1827.9,1029v-15M1158.2,1023.82h12.4M1158.2,1003.91h12.4M1158.2,989.79h12.4M1158.2,978.83h12.4M1158.2,969.88h12.4M1158.2,962.31h12.4M1158.2,955.76h12.4M1158.2,949.97h12.4M1158.2,944.8h24.5M1158.2,910.77h12.4M1158.2,890.86h12.4M1158.2,876.74h12.4M1158.2,865.78h12.4M1158.2,856.83h12.4M1158.2,849.26h12.4M1158.2,842.71h12.4M1158.2,836.92h12.4M1158.2,831.75h24.5M1158.2,797.72h12.4M1158.2,777.81h12.4M1158.2,763.69h12.4M1158.2,752.73h12.4M1158.2,743.78h12.4M1158.2,736.21h12.4M1158.2,729.66h12.4M1158.2,723.87h12.4M1158.2,718.7h24.5M1158.2,684.67h12.4M1158.2,664.76h12.4M1158.2,650.64h12.4M1158.2,639.68h12.4" fill="none" stroke="#1a1a1a" stroke-width="1.2"/>
<rect x="1158.2" y="631.2" width="676.4" height="397.8" fill="none" stroke="#1a1a1a" stroke-width="1.3"/>
<g font-family="Liberation Sans, sans-serif" font-size="16.4" fill="#000"><text x="1158.2" y="1046.7" text-anchor="middle">0</text><text x="1225.17" y="1046.7" text-anchor="middle">200</text><text x="1292.14" y="1046.7" text-anchor="middle">400</text><text x="1359.11" y="1046.7" text-anchor="middle">600</text><text x="1426.08" y="1046.7" text-anchor="middle">800</text><text x="1493.05" y="1046.7" text-anchor="middle">1000</text><text x="1560.02" y="1046.7" text-anchor="middle">1200</text><text x="1626.99" y="1046.7" text-anchor="middle">1400</text><text x="1693.96" y="1046.7" text-anchor="middle">1600</text><text x="1760.93" y="1046.7" text-anchor="middle">1800</text><text x="1827.9" y="1046.7" text-anchor="middle">2000</text><text x="1834.6" y="1062.2" text-anchor="end" font-size="17">Energy [keV]</text><text transform="translate(1111,631.2) rotate(-90)" text-anchor="end" font-size="17">Counts</text><text x="1155.4" y="952.6" text-anchor="end">10<tspan font-size="11" dy="-4.6">-1</tspan></text><text x="1155.4" y="839.55" text-anchor="end">10<tspan font-size="11" dy="-4.6">0</tspan></text><text x="1155.4" y="726.5" text-anchor="end">10<tspan font-size="11" dy="-4.6">1</tspan></text></g>
<rect x="1733.88" y="614.84" width="168.35" height="79.6" fill="#fff" stroke="#1a1a1a" stroke-width="1.2"/>
<path d="M1733.88,634.74H1902.23" stroke="#1a1a1a" stroke-width="1.2"/>
<g font-family="Liberation Sans, sans-serif" font-size="15" fill="#000"><text x="1818.06" y="628.19" text-anchor="middle" font-size="15.3">lowEnergyEyTotalD...</text><text x="1741.28" y="648.39">Entries</text><text x="1894.83" y="648.39" text-anchor="end">442</text><text x="1741.28" y="668.29">Mean</text><text x="1894.83" y="668.29" text-anchor="end">775.7</text><text x="1741.28" y="688.19">Std Dev</text><text x="1894.83" y="688.19" text-anchor="end">210.4</text></g>
<rect x="717.76" y="422.47" width="6.43" height="109.33" fill="#b0c4de" fill-opacity="0.7"/>
<rect x="232" y="567" width="10" height="10" fill="#b0c4de"/>
<rect x="1078" y="567" width="10" height="10" fill="#b0c4de"/>
<rect x="232" y="1064" width="10" height="10" fill="#b0c4de"/>
<rect x="1078" y="1064" width="10" height="10" fill="#b0c4de"/>
<rect x="733.4" y="464.6" width="203.4" height="49.8" fill="#d3d3d3"/>
<g font-family="DejaVu Serif, serif" font-size="9.8" fill="#111"><text x="735.6" y="474.2">Files/test.root/lowEnergyEyTotalDSSD0</text><text x="735.6" y="486.2">bin = 64</text><text x="735.6" y="498.2">x = [1260, 1280)</text><text x="735.6" y="510.2">entries = 3</text></g>
</svg>
</div>
<div id="gn">
<div id="code">
<div style="top:0px;left:108.90px">hname[<span class="n">0</span>] = <span class="s">'\0'</span>;</div>
<div style="top:18px;left:108.90px">sprintf(hname,<span class="s">"lowEnergyEyYRateDSSD</span><span class="f">%d</span><span class="s">"</span>,i);</div>
<div style="top:36px;left:108.90px">lowEnergyEyYRate[i] = <span class="k">new</span> TH2D(hname, <span class="s">""</span>, <span class="n">128</span>,<span class="n">0</span>,<span class="n">128</span>,<span class="n">250</span>,<span class="n">0</span>,<span class="n">20e3</span>);</div>
<div style="top:54px;left:108.90px">hname[<span class="n">0</span>] = <span class="s">'\0'</span>;</div>
<div style="top:72px;left:108.90px">sprintf(hname,<span class="s">"lowEnergyExXRate1sDSSD</span><span class="f">%d</span><span class="s">"</span>,i);</div>
<div style="top:90px;left:108.90px">lowEnergyExXRate1s[i] = <span class="k">new</span> TH2D(hname, <span class="s">""</span>, <span class="n">128</span>,<span class="n">0</span>,<span class="n">128</span>,<span class="n">250</span>,<span class="n">0</span>,<span class="n">20e3</span>);</div>
<div style="top:108px;left:108.90px">hname[<span class="n">0</span>] = <span class="s">'\0'</span>;</div>
<div style="top:126px;left:108.90px">sprintf(hname,<span class="s">"lowEnergyEyYRate1sDSSD</span><span class="f">%d</span><span class="s">"</span>,i);</div>
<div style="top:144px;left:108.90px">lowEnergyEyYRate1s[i] = <span class="k">new</span> TH2D(hname, <span class="s">""</span>, <span class="n">128</span>,<span class="n">0</span>,<span class="n">128</span>,<span class="n">250</span>,<span class="n">0</span>,<span class="n">20e3</span>);</div>
<div style="top:162px;left:108.90px">hname[<span class="n">0</span>] = <span class="s">'\0'</span>;</div>
<div style="top:180px;left:108.90px">sprintf(hname,<span class="s">"lowEnergyExXTotalDSSD</span><span class="f">%d</span><span class="s">"</span>,i);</div>
<div style="top:198px;left:108.90px">lowEnergyExXTotal[i] = <span class="k">new</span> TH2D(hname, <span class="s">""</span>, <span class="n">128</span>,<span class="n">0</span>,<span class="n">128</span>,<span class="n">250</span>,<span class="n">0</span>,<span class="n">20e3</span>);</div>
<div style="top:216px;left:108.90px">hname[<span class="n">0</span>] = <span class="s">'\0'</span>;</div>
<div style="top:234px;left:108.90px">sprintf(hname,<span class="s">"lowEnergyEyYTotalDSSD</span><span class="f">%d</span><span class="s">"</span>,i);</div>
<div style="top:252px;left:108.90px">lowEnergyEyYTotal[i] = <span class="k">new</span> TH2D(hname, <span class="s">""</span>, <span class="n">128</span>,<span class="n">0</span>,<span class="n">128</span>,<span class="n">250</span>,<span class="n">0</span>,<span class="n">20e3</span>);</div>
<div style="top:270px;left:216.90px">hname[<span class="n">0</span>] = <span class="s">'\0'</span>;</div>
<div style="top:288px;left:108.90px">sprintf(hname,<span class="s">"lowEnergyEyTotalDSSD</span><span class="f">%d</span><span class="s">"</span>,i);</div>
<div style="top:306px;left:216.90px">lowEnergyEyTotal[i] = <span class="k">new</span> TH1D(hname, <span class="s">""</span>, <span class="n">1200</span>,<span class="n">0</span>,<span class="n">24e3</span>);</div>
<div style="top:324px;left:216.90px">lowEnergyEyTotal[i]-&gt;GetXaxis()-&gt;SetTitle(<span class="s">"Energy [keV]"</span>);</div>
<div style="top:342px;left:216.90px">lowEnergyEyTotal[i]-&gt;GetYaxis()-&gt;SetTitle(<span class="s">"Counts"</span>);</div>
<div style="top:360px;left:216.90px">hname[<span class="n">0</span>] = <span class="s">'\0'</span>;</div>
<div style="top:378px;left:108.90px">sprintf(hname,<span class="s">"lowEnergyExTotalDSSD</span><span class="f">%d</span><span class="s">"</span>,i);</div>
<div style="top:396px;left:216.90px">lowEnergyExTotal[i] = <span class="k">new</span> TH1D(hname, <span class="s">""</span>, <span class="n">1200</span>,<span class="n">0</span>,<span class="n">24e3</span>);</div>
<div style="top:414px;left:216.90px">lowEnergyExTotal[i]-&gt;GetXaxis()-&gt;SetTitle(<span class="s">"Energy [keV]"</span>);</div>
<div style="top:432px;left:216.90px">lowEnergyExTotal[i]-&gt;GetYaxis()-&gt;SetTitle(<span class="s">"Counts"</span>);</div>
<div style="top:468px;left:216.90px">sprintf(hname,<span class="s">"lowEnergyEyRateDSSD</span><span class="f">%d</span><span class="s">"</span>,i);</div>
<div style="top:486px;left:216.90px">lowEnergyEyRate[i] = <span class="k">new</span> TH1D(hname, <span class="s">""</span>, <span class="n">1200</span>,<span class="n">0</span>,<span class="n">24e3</span>);</div>
<div style="top:504px;left:216.90px">lowEnergyEyRate[i]-&gt;GetXaxis()-&gt;SetTitle(<span class="s">"Energy [keV]"</span>);</div>
<div style="top:522px;left:216.90px">lowEnergyEyRate[i]-&gt;GetYaxis()-&gt;SetTitle(<span class="s">"Counts"</span>);</div>
<div style="top:558px;left:324.90px">sprintf(hname,<span class="s">"lowEnergyExRateDSSD</span><span class="f">%d</span><span class="s">"</span>,i);</div>
<div style="top:576px;left:216.90px">lowEnergyExRate[i] = <span class="k">new</span> TH1D(hname, <span class="s">""</span>, <span class="n">1200</span>,<span class="n">0</span>,<span class="n">24e3</span>);</div>
<div style="top:594px;left:216.90px">lowEnergyExRate[i]-&gt;GetXaxis()-&gt;SetTitle(<span class="s">"Energy [keV]"</span>);</div>
<div style="top:612px;left:216.90px">lowEnergyExRate[i]-&gt;GetYaxis()-&gt;SetTitle(<span class="s">"Counts"</span>);</div>
<div style="top:648px;left:216.90px">sprintf(hname,<span class="s">"lowEnergyEyRate1sDSSD</span><span class="f">%d</span><span class="s">"</span>,i);</div>
<div style="top:666px;left:216.90px">lowEnergyEyRate1s[i] = <span class="k">new</span> TH1D(hname, <span class="s">""</span>, <span class="n">1200</span>,<span class="n">0</span>,<span class="n">24e3</span>);</div>
<div style="top:684px;left:216.90px">lowEnergyEyRate1s[i]-&gt;GetXaxis()-&gt;SetTitle(<span class="s">"Energy [keV]"</span>);</div>
<div style="top:702px;left:216.90px">lowEnergyEyRate1s[i]-&gt;GetYaxis()-&gt;SetTitle(<span class="s">"Counts"</span>);</div>
<div style="top:738px;left:324.90px">sprintf(hname,<span class="s">"lowEnergyExRate1sDSSD</span><span class="f">%d</span><span class="s">"</span>,i);</div>
<div style="top:756px;left:216.90px">lowEnergyExRate1s[i] = <span class="k">new</span> TH1D(hname, <span class="s">""</span>, <span class="n">1200</span>,<span class="n">0</span>,<span class="n">24e3</span>);</div>
<div style="top:774px;left:216.90px">lowEnergyExRate1s[i]-&gt;GetXaxis()-&gt;SetTitle(<span class="s">"Energy [keV]"</span>);</div>
<div style="top:792px;left:216.90px">lowEnergyExRate1s[i]-&gt;GetYaxis()-&gt;SetTitle(<span class="s">"Counts"</span>);</div>
<div style="top:810px;left:144.90px">}</div>
<div style="top:864px;left:0.90px"><span class="p">#endif</span></div>
<div style="top:900px;left:72.90px"><span class="p">#ifdef OLD_OUTPUT</span></div>
<div style="top:918px;left:72.90px">outputTree = <span class="k">new</span> TTree(<span class="s">"aida"</span>,<span class="s">"aida"</span>);</div>
</div>
<svg class="abs" style="left:0;top:76px" width="1920" height="1"><path d="M5,0.5H1920" stroke="#c6c6c4" stroke-width="1" stroke-dasharray="5 5"/></svg>
<svg class="abs" style="left:0;top:1011px" width="1920" height="1"><path d="M5,0.5H1920" stroke="#c6c6c4" stroke-width="1" stroke-dasharray="5 5"/></svg>
<div class="abs" style="left:0;top:28px;width:1px;height:1015px;background:#969696;z-index:3"></div>
<div id="panel">
<svg class="abs" style="left:7px;top:5px" width="17" height="17" viewBox="1927 5 17 17"><rect x="1930.4" y="8.4" width="4.5" height="4.3" fill="#9ccd2a"/><rect x="1936" y="8.4" width="4.5" height="4.3" fill="#a3217f"/><rect x="1930.4" y="14.2" width="4.5" height="4.3" fill="#2a2a7c"/><rect x="1936" y="14.2" width="4.5" height="4.3" fill="#efa724"/><path d="M1935.45,6.8V12.6" stroke="#efa724" stroke-width="1.3"/><path d="M1935.45,14.2V20" stroke="#9ccd2a" stroke-width="1.3"/><path d="M1928.8,13.45H1934.6" stroke="#a3217f" stroke-width="1.3"/><path d="M1936.3,13.45H1942" stroke="#2a2a7c" stroke-width="1.3"/><circle cx="1935.45" cy="6.9" r="0.9" fill="#efa724"/><circle cx="1935.45" cy="19.9" r="0.9" fill="#9ccd2a"/><circle cx="1928.9" cy="13.45" r="0.9" fill="#a3217f"/><circle cx="1941.9" cy="13.45" r="0.9" fill="#2a2a7c"/></svg>
<span class="abs ui" style="left:31.3px;top:5px;line-height:17px">Applications</span>
<span class="abs ui" style="left:129.6px;top:5px;line-height:17px">Places</span>
<svg class="abs" style="left:193px;top:1px" width="24" height="24" viewBox="0 0 24 24"><defs><radialGradient id="fg193" cx="0.78" cy="0.12" r="1.05"><stop offset="0" stop-color="#fff44f"/><stop offset="0.3" stop-color="#ffbd2e"/><stop offset="0.55" stop-color="#ff7a2a"/><stop offset="0.8" stop-color="#ff3647"/><stop offset="1" stop-color="#e31587"/></radialGradient></defs><path d="M13.2,3.2c0.6,-1.4 2.2,-2.6 2.2,-2.6c0,1.6 1,2.8 2.2,3.8c2.8,1.8 4.6,4.8 4.6,8.2c0,5.8 -4.6,10.4 -10.2,10.4s-10.2,-4.6 -10.2,-10.4c0,-2.2 0.6,-4 1.6,-5.4c0,0.9 0.3,1.6 0.7,2c0.3,-2.4 1.6,-4.4 3.4,-5.6c-0.1,0.9 0.1,1.7 0.5,2.2c1.2,-1.4 3.2,-2.4 5.2,-2.6z" fill="url(#fg193)"/><circle cx="11.4" cy="12.2" r="5" fill="#8a52f0"/><path d="M5.6,11.4c1.2,-1 2.8,-0.8 3.8,0c0.8,0.8 2.2,0.8 3.2,0.4c-0.6,1 -1.8,1.4 -2,2.4c0.4,1.6 2.2,2.4 3.8,2c1.8,-0.4 3,-2 3,-3.8c0,-1 -0.4,-1.8 -0.8,-2.4c2,1 3,3.2 2.6,5.4c-0.6,3 -3.4,5 -6.6,4.8c-3.6,-0.2 -6.6,-3 -7,-6.4z" fill="#ff8a2a"/><path d="M8.2,8.2c1.6,-1.4 4.2,-1.6 6,-0.6c-1.4,0 -2.4,0.6 -2.8,1.4c-1,-0.8 -2.2,-1 -3.2,-0.8z" fill="#ffb23e" opacity="0.9"/></svg>
<svg class="abs" style="left:226px;top:2px" width="19" height="22" viewBox="0 0 19 22"><rect x="0.6" y="0.6" width="17.8" height="20.8" rx="1.5" fill="#7fa3d9" stroke="#3a5f9e"/><rect x="3" y="3.2" width="13" height="6.6" fill="#a9c3ea" stroke="#3a5f9e" stroke-width="0.8"/><rect x="3" y="11.6" width="13" height="6.6" fill="#a9c3ea" stroke="#3a5f9e" stroke-width="0.8"/><rect x="6.6" y="5.2" width="5.8" height="2.4" fill="#eef3fb" stroke="#55627a" stroke-width="0.6"/><rect x="6.6" y="13.6" width="5.8" height="2.4" fill="#eef3fb" stroke="#55627a" stroke-width="0.6"/></svg>
<svg class="abs" style="left:254px;top:2.5px" width="22" height="20" viewBox="0 0 21 19"><rect x="0.5" y="0.5" width="20" height="18" rx="1.5" fill="#b9bbb8" stroke="#8a8c89"/><rect x="2.2" y="2.2" width="16.6" height="14.2" fill="#2e3436"/><path d="M4,5l2.2,1.6l-2.2,1.6M7.2,9.4h3" stroke="#d3d7cf" stroke-width="1" fill="none"/></svg>
<svg class="abs" style="left:297px;top:1px" width="24" height="24" viewBox="0 0 24 24"><rect width="24" height="24" fill="#f5cf27"/><text x="0.8" y="14" font-family="Liberation Serif,serif" font-weight="bold" font-size="13.5" fill="#1a1a1a">M</text><text x="12" y="14" font-family="Liberation Serif,serif" font-weight="bold" font-size="6.6" fill="#1a1a1a" textLength="11" lengthAdjust="spacingAndGlyphs">idas</text><rect x="12.6" y="15.6" width="4.8" height="7.6" fill="#cf4a2c"/><rect x="14.2" y="17" width="1.4" height="5" fill="#7a6fb0"/><path d="M2.4,17.4h5.6" stroke="#9a8a30" stroke-width="0.7"/><circle cx="3.2" cy="2.8" r="1.9" fill="#4f6fa8"/><circle cx="3.2" cy="2.6" r="0.8" fill="#e8e8e8"/><circle cx="20.2" cy="2.6" r="1.5" fill="#6a86b8"/></svg>
<svg class="abs" style="left:357px;top:1px" width="24" height="24" viewBox="0 0 24 24"><rect width="24" height="24" fill="#f5cf27"/><text x="0.8" y="14" font-family="Liberation Serif,serif" font-weight="bold" font-size="13.5" fill="#1a1a1a">M</text><text x="12" y="14" font-family="Liberation Serif,serif" font-weight="bold" font-size="6.6" fill="#1a1a1a" textLength="11" lengthAdjust="spacingAndGlyphs">idas</text><rect x="12.6" y="15.6" width="4.8" height="7.6" fill="#cf4a2c"/><rect x="14.2" y="17" width="1.4" height="5" fill="#7a6fb0"/><path d="M2.4,17.4h5.6" stroke="#9a8a30" stroke-width="0.7"/><circle cx="3.2" cy="2.8" r="1.9" fill="#4f6fa8"/><circle cx="3.2" cy="2.6" r="0.8" fill="#e8e8e8"/><circle cx="20.2" cy="2.6" r="1.5" fill="#6a86b8"/></svg>
<svg class="abs" style="left:387px;top:1px" width="24" height="24" viewBox="0 0 24 24"><rect width="24" height="24" fill="#f5cf27"/><text x="0.8" y="14" font-family="Liberation Serif,serif" font-weight="bold" font-size="13.5" fill="#1a1a1a">M</text><text x="12" y="14" font-family="Liberation Serif,serif" font-weight="bold" font-size="6.6" fill="#1a1a1a" textLength="11" lengthAdjust="spacingAndGlyphs">idas</text><rect x="12.6" y="15.6" width="4.8" height="7.6" fill="#cf4a2c"/><rect x="14.2" y="17" width="1.4" height="5" fill="#7a6fb0"/><path d="M2.4,17.4h5.6" stroke="#9a8a30" stroke-width="0.7"/><circle cx="3.2" cy="2.8" r="1.9" fill="#4f6fa8"/><circle cx="3.2" cy="2.6" r="0.8" fill="#e8e8e8"/><circle cx="20.2" cy="2.6" r="1.5" fill="#6a86b8"/></svg>
<svg class="abs" style="left:417px;top:1px" width="24" height="24" viewBox="0 0 24 24"><rect width="24" height="24" fill="#f5cf27"/><text x="0.8" y="14" font-family="Liberation Serif,serif" font-weight="bold" font-size="13.5" fill="#1a1a1a">M</text><text x="12" y="14" font-family="Liberation Serif,serif" font-weight="bold" font-size="6.6" fill="#1a1a1a" textLength="11" lengthAdjust="spacingAndGlyphs">idas</text><rect x="12.6" y="15.6" width="4.8" height="7.6" fill="#cf4a2c"/><rect x="14.2" y="17" width="1.4" height="5" fill="#7a6fb0"/><path d="M2.4,17.4h5.6" stroke="#9a8a30" stroke-width="0.7"/><circle cx="3.2" cy="2.8" r="1.9" fill="#4f6fa8"/><circle cx="3.2" cy="2.6" r="0.8" fill="#e8e8e8"/><circle cx="20.2" cy="2.6" r="1.5" fill="#6a86b8"/></svg>
<svg class="abs" style="left:327px;top:1px" width="24" height="24" viewBox="0 0 24 24"><rect x="3.5" y="1.5" width="19" height="17" rx="1.5" fill="#f4f4f4" stroke="#5f7fb5"/><rect x="5" y="3" width="16" height="2.6" fill="#b8b8b8"/><rect x="16.5" y="7" width="4" height="9" fill="#9cc0ea"/><rect x="1" y="10.5" width="15" height="12" rx="2" fill="#6a6a6a" stroke="#3a3a3a"/><circle cx="9.5" cy="17" r="3.8" fill="#d8d8d8" stroke="#2a2a2a"/><circle cx="9.5" cy="17" r="1.8" fill="#3b5f9a"/></svg>
<span class="abs ui" style="left:461.5px;top:5px;line-height:17px">Terminal</span>
<svg class="abs" style="left:1719px;top:5px" width="16" height="16" viewBox="0 0 16 16"><rect width="16" height="16" fill="#ef443b"/><path d="M5.4,4.6l3.4,3.4l-3.4,3.4l-3.4,-3.4z" fill="#fff"/><path d="M8.6,4.2l3.8,3.8l-3.8,3.8l-1,-1l2.8,-2.8l-2.8,-2.8z" fill="#fff"/></svg>
<span class="abs ui" style="left:1751.4px;top:5px;line-height:17px">Sat 13:12</span>
<svg class="abs" style="left:1832px;top:5px" width="18" height="17" viewBox="0 0 18 17"><rect x="0.5" y="11" width="5" height="5" fill="#9a9c9b"/><rect x="12" y="11" width="5" height="5" fill="#9a9c9b"/><rect x="6.5" y="1" width="5" height="2" fill="#9a9c9b"/><text x="9" y="13" font-family="Liberation Sans,sans-serif" font-weight="bold" font-size="11" text-anchor="middle" fill="#2e3436">?</text></svg>
<svg class="abs" style="left:1860px;top:5px" width="20" height="17" viewBox="0 0 20 17"><path d="M1,5.5h3l4,-4v13l-4,-4h-3z" fill="#2e3436"/><path d="M10,5a4,4 0 0 1 0,6M12,3a7,7 0 0 1 0,10" fill="none" stroke="#9a9c9b" stroke-width="1.3"/><path d="M14,11.5l4,4m0,-4l-4,4" stroke="#2e3436" stroke-width="1.6"/></svg>
<svg class="abs" style="left:1889px;top:5px" width="16" height="16" viewBox="0 0 16 16" fill="none" stroke="#2e3436" stroke-width="1.8" stroke-linecap="round"><path d="M8,1v6.2"/><path d="M4.3,3.4a6,6 0 1 0 7.4,0"/></svg>
</div>
<div id="ghead">
<div class="btn" style="left:5px;top:5px;width:85px;height:34px"><span class="abs ui" style="left:17px;top:8.2px;color:#8b8e8f;line-height:17px">Open</span><svg class="abs" style="left:63px;top:14px" width="9" height="5"><path d="M0,0h9l-4.5,5z" fill="#8b8e8f"/></svg></div>
<div class="btn" style="left:96px;top:5px;width:34px;height:34px"><svg class="abs" style="left:8px;top:8px" width="17" height="16" viewBox="0 0 17 16" fill="none" stroke="#8b8e8f" stroke-width="1.8"><path d="M1.5,14.5v-3.5h2.2v-8h9.6v8h2.2v3.5z"/><path d="M8.5,4.5v5M6,7h5"/></svg></div>
<span class="abs ui" style="left:892.6px;top:5.3px;color:#8b8e8f;font-weight:bold;font-size:13.66px;line-height:17px">EventClustering.cpp</span>
<span class="abs ui" style="left:892.6px;top:25px;color:#c2c3c3;font-size:11.56px;line-height:15px">~/Programs/CARME_Sort</span>
<div class="btn" style="left:1681px;top:5px;width:65.5px;height:34px"><span class="abs ui" style="left:16.5px;top:8.2px;color:#8b8e8f;line-height:17px">Save</span></div>
<div class="btn" style="left:1752.5px;top:5px;width:34px;height:34px"><svg class="abs" style="left:11px;top:10.5px" width="11" height="11"><path d="M0,1.2h11M0,5.4h11M0,9.6h11" stroke="#8b8e8f" stroke-width="1.7"/></svg></div>
<div class="abs" style="left:1792.5px;top:5px;width:1px;height:34px;background:#d2d2d0"></div>
<svg class="abs" style="left:1806px;top:10.7px" width="100" height="22" viewBox="3726 40 100 22"><path d="M3732.6,54.7h8" stroke="#8b8e8f" stroke-width="1.6"/><rect x="3774.7" y="48.5" width="5" height="5" fill="none" stroke="#8b8e8f" stroke-width="1.6"/><path d="M3813.6,47.6l7,7m0,-7l-7,7" stroke="#8b8e8f" stroke-width="1.7"/></svg>
</div>
<div id="status">
<span class="abs ui" style="left:1514px;top:4.8px;line-height:17px">C++</span><svg class="abs" style="left:1549.5px;top:11.5px" width="9" height="5"><path d="M0,0h9l-4.5,5z" fill="#8b8e8f"/></svg>
<span class="abs ui" style="left:1576.3px;top:4.8px;line-height:17px">Tab Width: 8</span><svg class="abs" style="left:1663.5px;top:11.5px" width="9" height="5"><path d="M0,0h9l-4.5,5z" fill="#8b8e8f"/></svg>
<span class="abs ui" style="left:1723.6px;top:4.8px;line-height:17px">Ln 47, Col 77</span><svg class="abs" style="left:1840px;top:11.5px" width="9" height="5"><path d="M0,0h9l-4.5,5z" fill="#8b8e8f"/></svg>
<span class="abs ui" style="left:1879px;top:4.8px;line-height:17px">INS</span>
</div>
<div id="taskbar">
<div class="task" style="left:5px;top:5.3px;width:29.5px;height:26px;background:linear-gradient(#f4f4f3,#ebebea)"><svg class="abs" style="left:7px;top:5.5px" width="14" height="14" viewBox="0 0 14 14" fill="none" stroke="#2e3436" stroke-width="1.7"><rect x="6" y="1" width="7" height="6"/><path d="M3.5,7.5h-2.5v5.5h6.5v-2.5"/></svg></div>
<div class="task" style="left:39px;background:linear-gradient(#c9c9c8,#d0d0cf);border-color:#b6b6b4"><svg class="abs" style="left:8px;top:3.5px" width="21" height="19" viewBox="0 0 21 19"><rect x="0.5" y="0.5" width="20" height="18" rx="1.5" fill="#b9bbb8" stroke="#8a8c89"/><rect x="2.2" y="2.2" width="16.6" height="14.2" fill="#2e3436"/><path d="M4,5l2.2,1.6l-2.2,1.6M7.2,9.4h3" stroke="#d3d7cf" stroke-width="1" fill="none"/></svg><span style="letter-spacing:-0.34px">npg@carme-gsi:~/Programs/CARME...</span></div>
<div class="task" style="left:307px"><svg class="abs" style="left:5.5px;top:2.6px" width="24" height="24" viewBox="0 0 24 24"><defs><radialGradient id="fg5" cx="0.78" cy="0.12" r="1.05"><stop offset="0" stop-color="#fff44f"/><stop offset="0.3" stop-color="#ffbd2e"/><stop offset="0.55" stop-color="#ff7a2a"/><stop offset="0.8" stop-color="#ff3647"/><stop offset="1" stop-color="#e31587"/></radialGradient></defs><path d="M13.2,3.2c0.6,-1.4 2.2,-2.6 2.2,-2.6c0,1.6 1,2.8 2.2,3.8c2.8,1.8 4.6,4.8 4.6,8.2c0,5.8 -4.6,10.4 -10.2,10.4s-10.2,-4.6 -10.2,-10.4c0,-2.2 0.6,-4 1.6,-5.4c0,0.9 0.3,1.6 0.7,2c0.3,-2.4 1.6,-4.4 3.4,-5.6c-0.1,0.9 0.1,1.7 0.5,2.2c1.2,-1.4 3.2,-2.4 5.2,-2.6z" fill="url(#fg5)"/><circle cx="11.4" cy="12.2" r="5" fill="#8a52f0"/><path d="M5.6,11.4c1.2,-1 2.8,-0.8 3.8,0c0.8,0.8 2.2,0.8 3.2,0.4c-0.6,1 -1.8,1.4 -2,2.4c0.4,1.6 2.2,2.4 3.8,2c1.8,-0.4 3,-2 3,-3.8c0,-1 -0.4,-1.8 -0.8,-2.4c2,1 3,3.2 2.6,5.4c-0.6,3 -3.4,5 -6.6,4.8c-3.6,-0.2 -6.6,-3 -7,-6.4z" fill="#ff8a2a"/><path d="M8.2,8.2c1.6,-1.4 4.2,-1.6 6,-0.6c-1.4,0 -2.4,0.6 -2.8,1.4c-1,-0.8 -2.2,-1 -3.2,-0.8z" fill="#ffb23e" opacity="0.9"/></svg><span>Online server — Mozilla Firefox</span></div>
<div class="task" style="left:575px"><svg class="abs" style="left:7px;top:3px" width="23" height="23" viewBox="0 0 23 23"><rect x="1.5" y="3" width="15" height="18.5" fill="#f6f6f4" stroke="#8a8a86"/><path d="M3,3v-2M5.5,3v-2M8,3v-2M10.5,3v-2M13,3v-2M15.5,3v-2" stroke="#555" stroke-width="0.8"/><path d="M4,8h10M4,11h10M4,14h8" stroke="#c8c8c4" stroke-width="0.9"/><path d="M20.5,3.5l-10,12l-1.6,4l3.8,-2.2l10,-12z" fill="#f0a020" stroke="#b05a10" stroke-width="0.8"/><path d="M20.5,3.5l2.2,1.8" stroke="#d03030" stroke-width="2.2"/></svg><span style="letter-spacing:-0.2px">EventClustering.cpp (~/Programs/CA...</span></div>
<div class="task" style="left:843px"><svg class="abs" style="left:8px;top:3.5px" width="21" height="19" viewBox="0 0 21 19"><rect x="0.5" y="0.5" width="20" height="18" rx="1.5" fill="#d6d7d5" stroke="#8a8c89"/><rect x="2.2" y="2.2" width="16.6" height="14.2" fill="#8a8d8c"/><path d="M4,5l2.2,1.6l-2.2,1.6M7.2,9.4h3" stroke="#d3d7cf" stroke-width="1" fill="none"/></svg><span style="color:#8f9191">[Merger/Tape HTTPd]</span></div>
<div class="abs" style="left:1567.6px;top:5.2px;width:53.6px;height:26.6px;border:1px solid #cdcdcb;border-radius:4px 0 0 4px;background:#dededd"></div>
<div class="abs" style="left:1624.6px;top:5.2px;width:53.6px;height:26.6px;border:1px solid #cdcdcb;border-radius:0;background:#dededd"></div>
<div class="abs" style="left:1681.6px;top:5.2px;width:53.6px;height:26.6px;border:1px solid #cdcdcb;border-radius:0;background:#dededd"></div>
<div class="abs" style="left:1738.6px;top:5.2px;width:53.6px;height:26.6px;border:1px solid #c6c6c4;border-radius:0;background:#c9c9c8"></div>
<div class="abs" style="left:1795.6px;top:5.2px;width:53.6px;height:26.6px;border:1px solid #cdcdcb;border-radius:0;background:#dededd"></div>
<div class="abs" style="left:1852.6px;top:5.2px;width:53.6px;height:26.6px;border:1px solid #cdcdcb;border-radius:0 4px 4px 0;background:#dededd"></div>
</div>
<div id="term">
<div id="ttitle"><span class="abs ui" style="left:0;width:100%;text-align:center;top:9.5px;font-weight:bold;font-size:14.2px;line-height:17px">npg@carme-gsi:~/Programs/CARME_Sort/build</span><svg class="abs" style="left:639px;top:8.8px" width="86" height="18" viewBox="3587 97 86 18"><path d="M3592,109h8" stroke="#2e3436" stroke-width="2"/><rect x="3627" y="103" width="6.5" height="6.5" fill="none" stroke="#2e3436" stroke-width="2"/><path d="M3660.5,102.5l7,7m0,-7l-7,7" stroke="#2e3436" stroke-width="2.2"/></svg></div>
<div id="tmenu"><span class="abs ui" style="left:8.0px;top:5.8px;line-height:17px">File</span><span class="abs ui" style="left:47.0px;top:5.8px;line-height:17px">Edit</span><span class="abs ui" style="left:87.0px;top:5.8px;line-height:17px">View</span><span class="abs ui" style="left:134.0px;top:5.8px;line-height:17px">Search</span><span class="abs ui" style="left:194.0px;top:5.8px;line-height:17px">Terminal</span><span class="abs ui" style="left:265.0px;top:5.8px;line-height:17px">Help</span></div>
<div id="ttext">
<div style="top:2.7px">Opening dataspy 0</div>
<div style="top:20.7px">dataSpy Shared buffer area 0 (/SHM_110205) located at 0xa1a8c000</div>
<div style="top:38.7px">dataSpy Current age 4089570 index 34</div>
<div style="top:56.7px">Dataspy open</div>
<div style="top:74.7px">Info in &lt;THttpEngine::Create&gt;: Starting HTTP server on port 8085</div>
<div style="top:92.7px">^C</div>
<div style="top:110.7px">[npg@carme-gsi build]$ ./AIDASort -c ../ExampleConfig.csv -o test.root -s</div>
<div style="top:128.7px">Run time options:</div>
<div style="top:146.7px">-c</div>
<div style="top:164.7px">Configuration file: ../ExampleConfig.csv</div>
<div style="top:182.7px">-o</div>
<div style="top:200.7px">User output file: test.root</div>
<div style="top:218.7px">-s</div>
<div style="top:236.7px">Data spy option enabled</div>
<div style="top:254.7px">Adding files to be sorted:</div>
<div style="top:272.7px">/TapeData/G22-201/R15_8</div>
<div style="top:290.7px">/TapeData/G22-201/R15_9</div>
<div style="top:308.7px">/TapeData/G22-201/R15_10</div>
<div style="top:326.7px">Opening dataspy 0</div>
<div style="top:344.7px">dataSpy Shared buffer area 0 (/SHM_110205) located at 0xfa372000</div>
<div style="top:362.7px">dataSpy Current age 4091496 index 40</div>
<div style="top:380.7px">Dataspy open</div>
<div style="top:398.7px">Info in &lt;THttpEngine::Create&gt;: Starting HTTP server on port 8085</div>
<div style="top:415.8px;left:0.6px;width:10px;height:18px;border:1px solid #1c1c1c"></div>
</div>
<div id="tscroll"><div class="abs" style="left:3px;top:391.5px;width:5.6px;height:40px;border-radius:3px;background:#7b8081"></div></div>
</div>
</div>
</body></html>
